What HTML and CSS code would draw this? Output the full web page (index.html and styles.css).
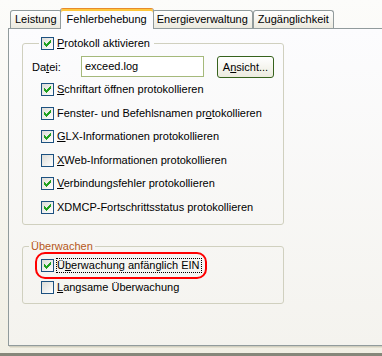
FILE: index.html
```html
<!DOCTYPE html>
<html lang="de">
<head>
    <meta charset="UTF-8">
    <title>Fehlerbehebung</title>
    <link rel="stylesheet" href="styles.css">
</head>
<body>
    <div class="dialog">
        <div class="tabs">
            <div class="tab">Leistung</div>
            <div class="tab active">Fehlerbehebung</div>
            <div class="tab">Energieverwaltung</div>
            <div class="tab">Zugänglichkeit</div>
        </div>
        <div class="panel">
            <fieldset class="group group-log">
                <legend class="check-legend">
                    <span class="cb checked"><svg viewBox="0 0 11 11"><path d="M2 4h1v3H2zM3 5h1v3H3zM4 6h1v3H4zM5 5h1v3H5zM6 4h1v3H6zM7 3h1v3H7zM8 2h1v3H8z"/></svg></span>
                    <span class="label"><u>P</u>rotokoll aktivieren</span>
                </legend>
                <div class="file-row">
                    <span class="file-label">Da<u>t</u>ei:</span>
                    <span class="textbox">exceed.log</span>
                    <span class="button">A<u>n</u>sicht...</span>
                </div>
                <ul class="options">
                    <li>
                        <span class="cb checked"><svg viewBox="0 0 11 11"><path d="M2 4h1v3H2zM3 5h1v3H3zM4 6h1v3H4zM5 5h1v3H5zM6 4h1v3H6zM7 3h1v3H7zM8 2h1v3H8z"/></svg></span>
                        <span class="label"><u>S</u>chriftart öffnen protokollieren</span>
                    </li>
                    <li>
                        <span class="cb checked"><svg viewBox="0 0 11 11"><path d="M2 4h1v3H2zM3 5h1v3H3zM4 6h1v3H4zM5 5h1v3H5zM6 4h1v3H6zM7 3h1v3H7zM8 2h1v3H8z"/></svg></span>
                        <span class="label">Fenster- und Befehlsnamen pr<u>o</u>tokollieren</span>
                    </li>
                    <li>
                        <span class="cb checked"><svg viewBox="0 0 11 11"><path d="M2 4h1v3H2zM3 5h1v3H3zM4 6h1v3H4zM5 5h1v3H5zM6 4h1v3H6zM7 3h1v3H7zM8 2h1v3H8z"/></svg></span>
                        <span class="label"><u>G</u>LX-Informationen protokollieren</span>
                    </li>
                    <li>
                        <span class="cb"></span>
                        <span class="label"><u>X</u>Web-Informationen protokollieren</span>
                    </li>
                    <li>
                        <span class="cb checked"><svg viewBox="0 0 11 11"><path d="M2 4h1v3H2zM3 5h1v3H3zM4 6h1v3H4zM5 5h1v3H5zM6 4h1v3H6zM7 3h1v3H7zM8 2h1v3H8z"/></svg></span>
                        <span class="label"><u>V</u>erbindungsfehler protokollieren</span>
                    </li>
                    <li>
                        <span class="cb checked"><svg viewBox="0 0 11 11"><path d="M2 4h1v3H2zM3 5h1v3H3zM4 6h1v3H4zM5 5h1v3H5zM6 4h1v3H6zM7 3h1v3H7zM8 2h1v3H8z"/></svg></span>
                        <span class="label">XDMCP-Fortschrittsstatus protokollieren</span>
                    </li>
                </ul>
            </fieldset>
            <fieldset class="group group-watch">
                <legend class="title">Überwachen</legend>
                <ul class="options">
                    <li class="marked">
                        <span class="cb checked"><svg viewBox="0 0 11 11"><path d="M2 4h1v3H2zM3 5h1v3H3zM4 6h1v3H4zM5 5h1v3H5zM6 4h1v3H6zM7 3h1v3H7zM8 2h1v3H8z"/></svg></span>
                        <span class="label focused">Ü<u>b</u>erwachung anfänglich EIN</span>
                    </li>
                    <li>
                        <span class="cb"></span>
                        <span class="label"><u>L</u>angsame Überwachung</span>
                    </li>
                </ul>
            </fieldset>
        </div>
    </div>
</body>
</html>
```

FILE: styles.css
```css
* {
    margin: 0;
    padding: 0;
    box-sizing: border-box;
}
body {
    font: 11px "Liberation Sans", Arial, sans-serif;
    color: #000;
    background: linear-gradient(#fcfcfa, #f1efe4);
    height: 356px;
    overflow: hidden;
}
.dialog {
    height: 356px;
    padding: 8px 0 0 8px;
    border-bottom: 3px solid #86877a;
}
.tabs {
    display: flex;
    align-items: flex-end;
    height: 21px;
    margin-bottom: -1px;
    padding-left: 2px;
    position: relative;
    z-index: 1;
}
.tab {
    height: 18px;
    margin-bottom: 1px;
    padding: 0 4px;
    line-height: 17px;
    border: 1px solid #919b9c;
    border-bottom: none;
    border-radius: 3px 3px 0 0;
    background: linear-gradient(#ffffff, #eceadf);
    white-space: nowrap;
}
.tab.active {
    height: 21px;
    margin: 0 -2px;
    padding: 2px 6px 0;
    line-height: 16px;
    border-top: 1px solid #e68b2c;
    box-shadow: inset 0 2px 0 #ffc73c;
    background: #fcfcfe;
    position: relative;
}
.panel {
    height: 318px;
    padding: 7px 0 0 13px;
    border: 1px solid #919b9c;
    border-right: none;
    background: linear-gradient(#fcfcfe, #f4f3ee);
    box-shadow: 1px 1px 0 #d0cebf, 2px 2px 0 #e3e0d0;
}
.group {
    width: 262px;
    border: 1px solid #d0d0bf;
    border-radius: 3px;
}
.group-log {
    padding-bottom: 5px;
}
.group-watch {
    margin-top: 15px;
    padding-bottom: 4px;
}
.check-legend {
    display: flex;
    align-items: center;
    height: 14px;
    margin-left: 16px;
    padding: 0 2px;
}
.title {
    margin-left: 6px;
    padding: 0 2px;
    line-height: 13px;
    color: #b5581a;
}
.cb {
    flex: none;
    width: 13px;
    height: 13px;
    border: 1px solid #1c5180;
    background: linear-gradient(135deg, #dcdcd7, #ffffff);
}
.cb svg {
    display: block;
    width: 11px;
    height: 11px;
    fill: #21a121;
    shape-rendering: crispEdges;
}
.label {
    margin-left: 2px;
    padding: 0 1px 0 0;
    border: 1px solid transparent;
    line-height: 13px;
    white-space: nowrap;
}
.label.focused {
    border: 1px dotted #000;
}
.file-row {
    display: flex;
    align-items: center;
    height: 21px;
    margin: 6px 0 0 9px;
}
.file-label {
    width: 49px;
}
.textbox {
    width: 123px;
    height: 21px;
    padding-left: 3px;
    line-height: 19px;
    border: 1px solid #a5b97b;
    background: #fff;
}
.button {
    width: 57px;
    height: 22px;
    margin-left: 13px;
    line-height: 20px;
    text-align: center;
    border: 1px solid #37621d;
    border-radius: 3px;
    background: linear-gradient(#ffffff, #ecebdf);
}
.options {
    list-style: none;
    margin: 1px 0 0 18px;
}
.options li {
    display: flex;
    align-items: center;
    height: 23.5px;
}
.group-watch .options li {
    height: 23px;
}
.options li.marked {
    width: 172px;
    height: 27px;
    margin: -2px 0 -3px -6px;
    padding-left: 4px;
    border: 2px solid #ff0000;
    border-radius: 10px;
}
```
